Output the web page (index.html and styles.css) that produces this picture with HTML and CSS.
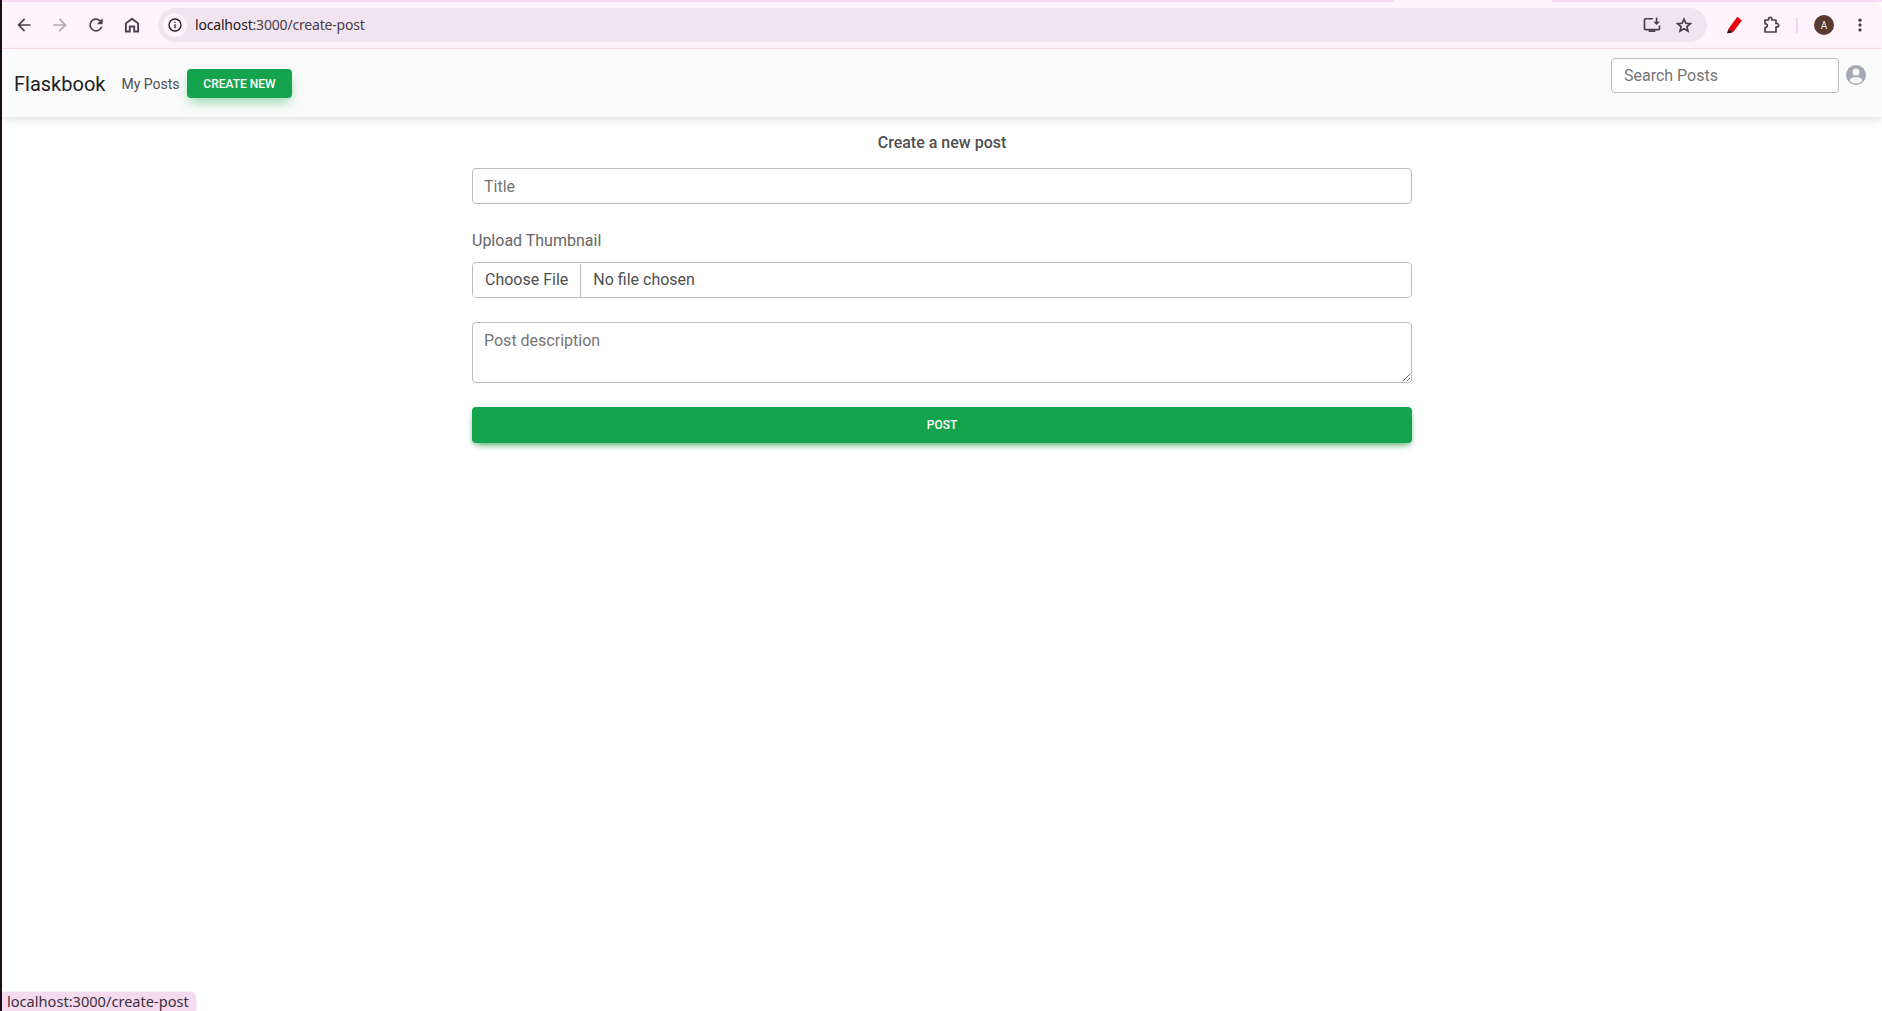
FILE: index.html
```html
<!DOCTYPE html>
<html lang="en">
<head>
<meta charset="utf-8">
<title>Flaskbook</title>
<link rel="stylesheet" href="styles.css">
</head>
<body>
<div class="edge"></div>
<div class="window">
  <div class="tabstrip"><span class="tab-gap"></span></div>
  <header class="toolbar">
    <div class="nav-icons">
      <svg class="tool" viewBox="0 0 24 24"><path d="M20 11H7.8l5.6-5.6L12 4l-8 8 8 8 1.400-1.400L7.800 13H20z"/></svg>
      <svg class="tool tool-off" viewBox="0 0 24 24"><path d="M4 11h12.200l-5.600-5.600L12 4l8 8-8 8-1.400-1.400 5.600-5.600H4z"/></svg>
      <svg class="tool" viewBox="0 0 24 24"><path d="M17.650 6.350A8 8 0 1 0 19.740 14h-2.080a6 6 0 1 1-1.420-6.240L13 11h7V4z"/></svg>
      <svg class="tool" viewBox="0 0 24 24"><path fill-rule="evenodd" d="M12 3 3.500 9.500V21h7v-6h3v6h7V9.500zM5.800 10.600 12 5.900l6.200 4.700v8.100h-2.400v-6H8.200v6H5.800z"/></svg>
    </div>
    <div class="omnibox">
      <span class="site-info">
        <svg class="info" viewBox="0 0 24 24"><path fill-rule="evenodd" d="M12 2a10 10 0 1 0 0 20 10 10 0 0 0 0-20zm0 2a8 8 0 1 1 0 16 8 8 0 0 1 0-16zM11 7h2v2h-2zm0 4h2v6h-2z"/></svg>
      </span>
      <span class="url">localhost<span class="url-path">:3000/create-post</span></span>
      <span class="omni-end">
        <svg class="tool" viewBox="0 0 24 24"><path fill-rule="evenodd" d="M4 3.500h9v2H4v11h16v-4h2v4a2 2 0 0 1-2 2h-4v2H8v-2H4a2 2 0 0 1-2-2v-11a2 2 0 0 1 2-2zM16.500 3h2v5h3l-4 4-4-4h3z"/></svg>
        <svg class="tool" viewBox="0 0 24 24"><path fill-rule="evenodd" d="m12 2.500 2.900 6.500 7.100.7-5.300 4.700 1.500 7-6.200-3.600-6.200 3.600 1.500-7L2 9.700l7.100-.7zm0 5-1.500 3.300-3.600.4 2.700 2.400-.8 3.600 3.200-1.800 3.200 1.800-.8-3.600 2.700-2.400-3.600-.4z"/></svg>
      </span>
    </div>
    <div class="extensions">
      <svg class="tool" viewBox="0 0 24 24"><path class="marker" d="M16 2 21.500 6.500 11 20.500 5.500 16.500z"/><path class="marker-tip" d="M5.500 16.500 11 20.500 8 21.500 3.500 22z"/></svg>
      <svg class="tool puzzle" viewBox="0 0 20 20"><path d="M4 5H7.500V4a1.700 1.700 0 0 1 3.400 0V5H15V8.500H16a1.700 1.700 0 0 1 0 3.400H15V17H4V12.500H5a2 2 0 0 0 0-3.800H4z"/></svg>
      <span class="divider"></span>
      <span class="profile">A</span>
      <svg class="tool dots" viewBox="0 0 24 24"><circle cx="12" cy="5.500" r="2.200"/><circle cx="12" cy="12" r="2.200"/><circle cx="12" cy="18.500" r="2.200"/></svg>
    </div>
  </header>
  <nav class="navbar">
    <a class="brand">Flaskbook</a>
    <a class="nav-link">My Posts</a>
    <button class="btn btn-create" type="button">Create New</button>
    <div class="nav-right">
      <input class="search" type="text" placeholder="Search Posts">
      <svg class="user" viewBox="0 0 24 24"><path fill-rule="evenodd" d="M12 2a10 10 0 1 0 0 20 10 10 0 0 0 0-20zm0 3.500a3.500 3.500 0 1 1 0 7 3.500 3.500 0 0 1 0-7zM12 20.500a8.500 8.500 0 0 1-6.500-3.300c.9-2 3.800-3.200 6.500-3.200s5.600 1.200 6.500 3.200a8.500 8.500 0 0 1-6.500 3.300z"/></svg>
    </div>
  </nav>
  <main class="content">
    <form class="post-form">
      <h1 class="form-title">Create a new post</h1>
      <input class="field" type="text" placeholder="Title">
      <label class="file-label" for="thumb">Upload Thumbnail</label>
      <input class="field field-file" id="thumb" type="file">
      <textarea class="field field-area" placeholder="Post description"></textarea>
      <button class="btn btn-post" type="button">Post</button>
    </form>
  </main>
  <div class="status">localhost:3000/create-post</div>
</div>
</body>
</html>
```

FILE: styles.css
```css
* { box-sizing: border-box; }
html, body { height: 100%; }
body {
  margin: 0;
  display: flex;
  background: #1c0d1c;
  font-family: Roboto, "Noto Sans", sans-serif;
  font-size: 16px;
  color: #4f4f4f;
  overflow: hidden;
}
.edge { width: 2px; flex: none; }
.window {
  position: relative;
  flex: 1;
  min-width: 0;
  display: flex;
  flex-direction: column;
  background: #fff;
}
.tabstrip { height: 2px; flex: none; background: #f7dcf1; display: flex; }
.tab-gap { width: 158px; margin-left: 1392px; background: #fff4fb; }
.toolbar {
  height: 47px;
  flex: none;
  display: flex;
  align-items: center;
  background: #fff4fb;
  border-bottom: 1px solid #f5dcee;
  border-top-left-radius: 6px;
  border-top-right-radius: 8px;
  padding: 0 0 0 12px;
}
.nav-icons { display: flex; gap: 16px; width: 144px; flex: none; }
.tool { width: 20px; height: 20px; fill: #4d3f4c; flex: none; }
.tool-off { fill: #b0a8ae; }
.omnibox {
  flex: 1;
  height: 34px;
  display: flex;
  align-items: center;
  background: #f1e4ef;
  border-radius: 17px;
  padding: 0 13px 0 5px;
}
.site-info {
  width: 24px;
  height: 24px;
  border-radius: 50%;
  background: #fff4fb;
  display: flex;
  align-items: center;
  justify-content: center;
  flex: none;
}
.info { width: 16px; height: 16px; fill: #1f1a1f; }
.url {
  margin-left: 8px;
  padding-bottom: 2px;
  font-family: "Noto Sans", Roboto, sans-serif;
  font-size: 14px;
  letter-spacing: -0.18px;
  color: #1f1a1f;
}
.url-path { color: #4a4149; }
.omni-end { margin-left: auto; display: flex; gap: 12px; }
.extensions { display: flex; align-items: center; width: 175px; flex: none; padding-left: 17px; }
.puzzle { margin-left: 17px; fill: none; stroke: #4d3f4c; stroke-width: 1.7; stroke-linejoin: round; }
.dots { margin-left: 17px; width: 18px; height: 18px; }
.marker { fill: #e8000f; }
.marker-tip { fill: #4a0a0a; }
.divider { width: 2px; height: 16px; background: #f7d5ee; margin-left: 15px; }
.profile {
  width: 20px;
  height: 20px;
  margin-left: 16px;
  border-radius: 50%;
  background: #5a3a30;
  color: #f4ebe8;
  font-size: 10px;
  display: flex;
  align-items: center;
  justify-content: center;
}
.navbar {
  height: 68px;
  flex: none;
  position: relative;
  display: flex;
  align-items: center;
  background: #fbfbfb;
  padding: 1px 14px 0 12px;
  box-shadow: 0 4px 12px rgba(0, 0, 0, 0.07), 0 2px 4px rgba(0, 0, 0, 0.05);
}
.brand { font-size: 20px; color: #212121; margin-right: 16px; }
.nav-link { font-size: 14px; color: #4f4f4f; margin-right: 7px; }
.btn {
  border: 0;
  border-radius: 4px;
  background: #14a44d;
  color: #fff;
  font-family: inherit;
  font-size: 12px;
  font-weight: 500;
  text-transform: uppercase;
}
.btn-create { width: 105px; height: 29px; padding: 0 0 0 1px; box-shadow: 0 6px 12px -2px rgba(20, 164, 77, 0.45); }
.nav-right { margin-left: auto; align-self: flex-start; display: flex; align-items: flex-start; gap: 5px; margin-top: 8px; }
.search {
  width: 228px;
  height: 35px;
  padding: 0 12px;
  border: 1px solid #bdbdbd;
  border-radius: 4px;
  background: #fff;
  font: 16px Roboto, sans-serif;
  color: #4f4f4f;
}
.search::placeholder, .field::placeholder { color: #757575; opacity: 1; }
.user { width: 24px; height: 24px; fill: #a4a8b6; margin-top: 5px; }
.content { flex: 1; display: flex; justify-content: center; }
.post-form { width: 940px; display: flex; flex-direction: column; padding-top: 14px; }
.form-title {
  margin: 0 0 13px;
  font-size: 16px;
  font-weight: 500;
  line-height: 24px;
  text-align: center;
  color: #4f4f4f;
}
.field {
  width: 100%;
  height: 36px;
  flex: none;
  padding: 6px 11px;
  border: 1px solid #bdbdbd;
  border-radius: 4px;
  background: #fff;
  font: 16px/24px Roboto, sans-serif;
  color: #4f4f4f;
  outline: 0;
}
.file-label { margin: 24px 0 0; height: 34px; padding-top: 1px; line-height: 24px; color: #666; }
.field-file { padding: 0; overflow: hidden; line-height: 34px; }
.field-file::file-selector-button {
  height: 34px;
  margin: 0 12px 0 0;
  padding: 0 12px 2px;
  border: 0;
  border-right: 1px solid #bdbdbd;
  border-radius: 0;
  background: #fff;
  font: 16px Roboto, sans-serif;
  color: #4f4f4f;
}
.field-area { height: 61px; margin-top: 24px; resize: vertical; }
.btn-post { width: 100%; height: 36px; flex: none; margin-top: 24px; box-shadow: 0 4px 9px -4px #14a44d, 0 2px 4px rgba(0,0,0,.15); }
.status {
  position: absolute;
  left: 0;
  bottom: 0;
  height: 19px;
  padding: 0 7px 0 5px;
  background: #f6dbf0;
  border-top-right-radius: 6px;
  box-shadow: 0 0 2px rgba(0,0,0,.15);
  font-family: "Noto Sans", sans-serif;
  font-size: 14.600px;
  line-height: 19px;
  color: #3c2f3b;
}
```
